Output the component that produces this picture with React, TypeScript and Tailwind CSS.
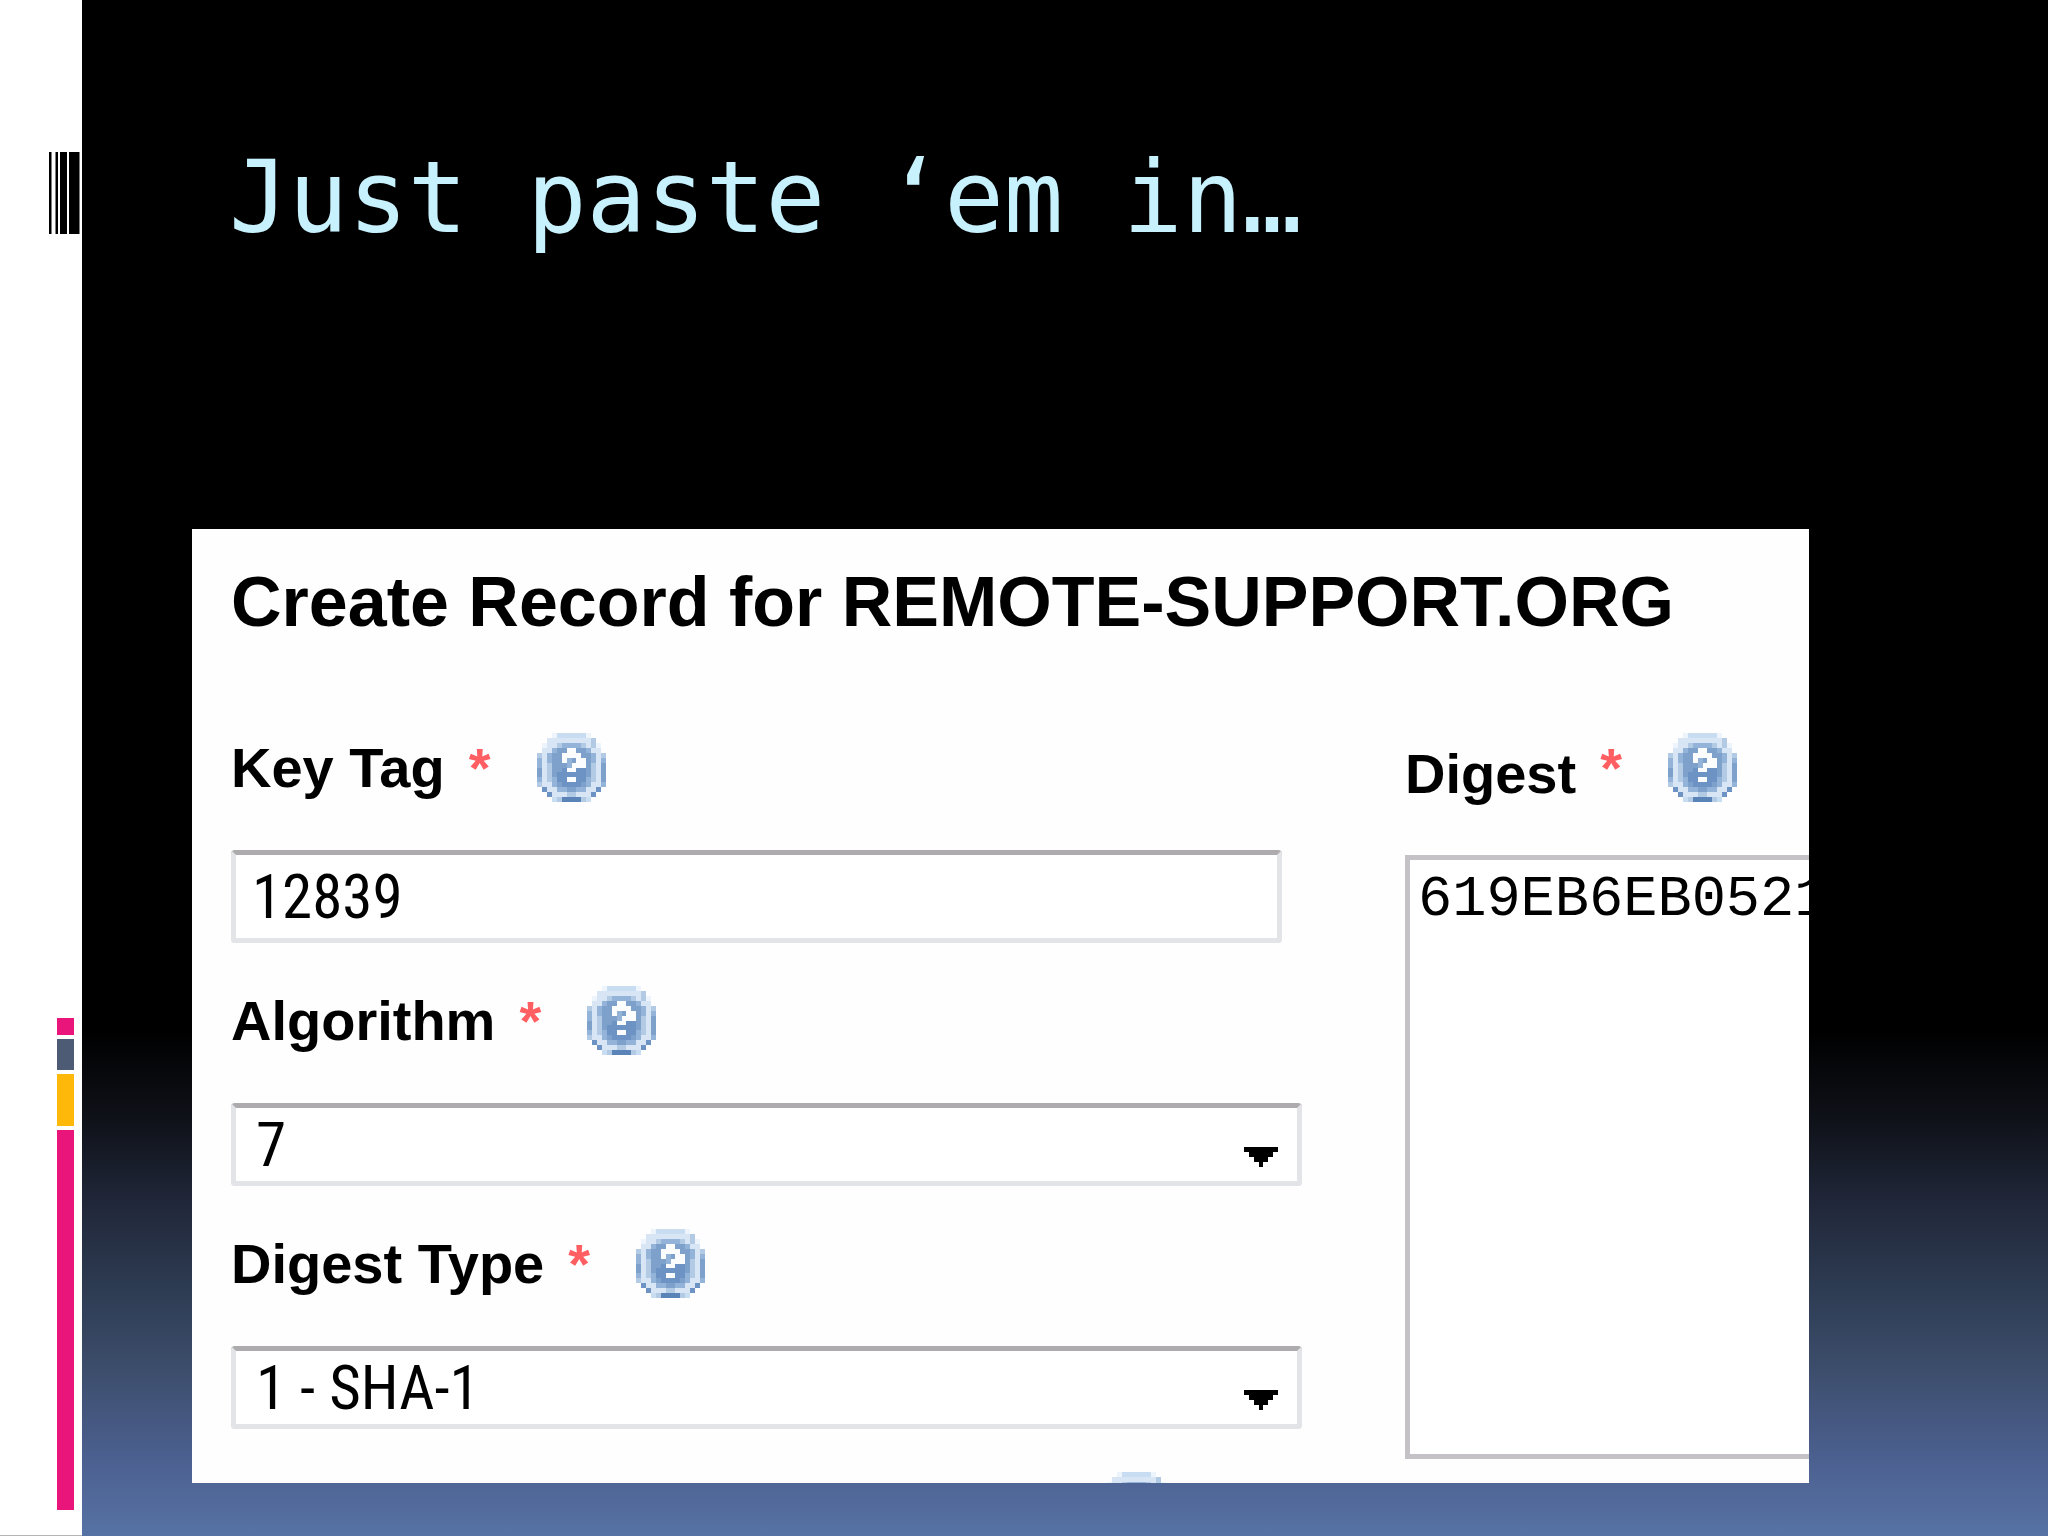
import type { ReactNode } from 'react';

const HELP_COLORS: Record<string, string> = {
  a: '#edf4fc',
  b: '#c9ddf2',
  h: '#d8e5f5',
  c: '#b3cae5',
  d: '#94b3d8',
  e: '#7ea1cc',
  f: '#6c93c3',
  g: '#5a84b8',
  w: '#fafcfe',
};

const HELP_ROWS = [
  '...abbbbbba...',
  '..hhhhhhhhhc..',
  '.ahhcddddchca.',
  '.hhdeewweedhh.',
  'chdeewwwweedhc',
  'dhdeewdewwedhd',
  'dhceeedwwweche',
  'ehceefwwffeche',
  'ehceffffffeche',
  'dhcdffwwffdche',
  'chhdeffffedhhd',
  '.fhhddeeddhhf.',
  '..fhhhcchhhf..',
  '...bcggggcb...',
];

function HelpIcon() {
  return (
    <svg viewBox="0 0 14 14" shapeRendering="crispEdges" className="h-[69px] w-[69px]" aria-hidden="true">
      {HELP_ROWS.map((row, y) =>
        row.split('').map((key, x) =>
          key === '.' ? null : (
            <rect key={`${x}-${y}`} x={x} y={y} width="1" height="1" fill={HELP_COLORS[key]} />
          )
        )
      )}
    </svg>
  );
}

interface FieldLabelProps {
  htmlFor: string;
  text: string;
  low?: boolean;
}

function FieldLabel({ htmlFor, text, low }: FieldLabelProps) {
  return (
    <div className="flex h-[69px] items-center">
      <label
        htmlFor={htmlFor}
        className={`text-[56px] leading-none font-bold whitespace-nowrap ${low ? 'self-end' : ''}`}
      >
        {text}
      </label>
      <span className="ml-6 text-[56px] leading-none font-bold text-[#ff5f62]">*</span>
      <button type="button" className="ml-[46px] shrink-0" aria-label="Help">
        <HelpIcon />
      </button>
    </div>
  );
}

interface SelectBoxProps {
  id: string;
  children: ReactNode;
}

function SelectBox({ id, children }: SelectBoxProps) {
  return (
    <div className="relative mt-12 h-[83px] w-[1071px]">
      <select
        id={id}
        className="h-full w-full appearance-none rounded-[4px] border-5 border-[#e3e4e8] border-t-[#adabae] bg-white pl-5 font-['Roboto_Condensed','Liberation_Sans_Narrow','Liberation_Sans',sans-serif] text-[61px] leading-[70px] text-black outline-none"
      >
        {children}
      </select>
      <svg
        viewBox="0 0 7 4"
        preserveAspectRatio="none"
        shapeRendering="crispEdges"
        className="pointer-events-none absolute top-11 right-6 h-5 w-[34px]"
        aria-hidden="true"
      >
        <path d="M0 0h7v1h-1v1h-1v1h-1v1h-1v-1h-1v-1h-1v-1h-1z" fill="#000" />
      </svg>
    </div>
  );
}

function SideRail() {
  return (
    <aside className="flex w-[82px] shrink-0 flex-col justify-between border-b border-[#b5b5b5] bg-white pt-[152px] pb-[25px]">
      <svg viewBox="0 0 31 82" className="ml-[49px] h-[82px] w-[31px]" aria-hidden="true">
        <rect x="0" y="0" width="2.5" height="82" />
        <rect x="6.5" y="0" width="2.5" height="82" />
        <rect x="11" y="0" width="7" height="82" />
        <rect x="20" y="0" width="10.5" height="82" />
      </svg>
      <div className="ml-[57px] flex w-[17px] flex-col gap-1">
        <div className="h-[17px] bg-[#e9157b]" />
        <div className="h-[31px] bg-[#4e5b74]" />
        <div className="h-[52px] bg-[#feb80a]" />
        <div className="h-[380px] bg-[#e9157b]" />
      </div>
    </aside>
  );
}

export default function App() {
  return (
    <div className="flex h-screen overflow-hidden bg-[linear-gradient(to_bottom,#000_67%,#0f1219_73%,#202638_78%,#2b384e_83%,#3c4d6b_89%,#4c6090_95%,#5672a4_100%)]">
      <SideRail />

      <main className="flex min-w-0 flex-1 flex-col pr-[239px] pb-[53px] pl-[110px]">
        <h1 className="mt-[138px] ml-[37px] h-[391px] font-['DejaVu_Sans_Mono',monospace] text-[99px] leading-[120px] whitespace-nowrap text-[#c6f1fd]">
          Just paste ‘em in…
        </h1>

        <form className="min-h-0 flex-1 overflow-hidden bg-[#fefefe] pt-[38px] pl-[39px] font-['Liberation_Sans',sans-serif] text-black">
          <h2 className="text-[70px] leading-[70px] font-bold whitespace-nowrap">
            Create Record for REMOTE-SUPPORT.ORG
          </h2>

          <div className="mt-24 grid grid-cols-[1174fr_404fr]">
            <div className="min-w-0">
              <FieldLabel htmlFor="key-tag" text="Key Tag" />
              <input
                id="key-tag"
                type="text"
                defaultValue="12839"
                className="mt-12 block h-[93px] w-[1051px] rounded-[4px] border-5 border-[#e3e4e8] border-t-[#adabae] bg-white pl-4 font-['Roboto_Condensed','Liberation_Sans_Narrow','Liberation_Sans',sans-serif] text-[61px] leading-[70px] outline-none"
              />

              <div className="mt-[43px]">
                <FieldLabel htmlFor="algorithm" text="Algorithm" />
                <SelectBox id="algorithm">
                  <option>7</option>
                </SelectBox>
              </div>

              <div className="mt-[43px]">
                <FieldLabel htmlFor="digest-type" text="Digest Type" />
                <SelectBox id="digest-type">
                  <option>1 - SHA-1</option>
                </SelectBox>
              </div>

              <button type="button" className="mt-[43px] ml-[871px] block" aria-label="Help">
                <HelpIcon />
              </button>
            </div>

            <div className="min-w-0">
              <FieldLabel htmlFor="digest" text="Digest" low />
              <textarea
                id="digest"
                defaultValue="619EB6EB0521"
                spellCheck={false}
                className="mt-[53px] block h-[604px] w-[640px] resize-none border-5 border-[#c4c2c6] bg-white px-2 py-3 font-['Liberation_Mono',monospace] text-[57px] leading-[57px] outline-none"
              />
            </div>
          </div>
        </form>
      </main>
    </div>
  );
}
